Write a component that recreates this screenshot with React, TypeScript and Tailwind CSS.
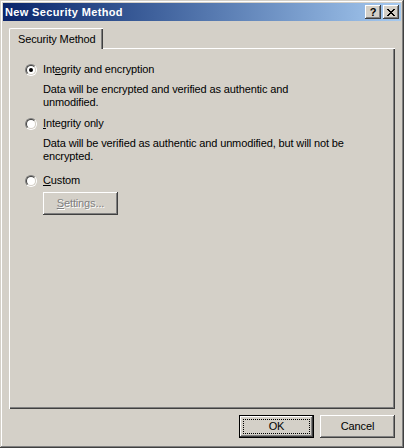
import React from "react";

const raised =
  "shadow-[inset_-1px_-1px_#404040,inset_1px_1px_#ffffff,inset_-2px_-2px_#808080,inset_2px_2px_#d4d0c8]";

const Radio = ({ checked }: { checked?: boolean }) => (
  <div className="w-[12px] h-[12px] rounded-full border border-t-[#808080] border-l-[#808080] border-b-white border-r-white shrink-0">
    <div className="w-full h-full rounded-full border border-t-[#404040] border-l-[#404040] border-b-[#d4d0c8] border-r-[#d4d0c8] bg-white flex items-center justify-center">
      {checked && <div className="w-[4px] h-[4px] rounded-full bg-black" />}
    </div>
  </div>
);

const Option = ({
  label,
  checked,
}: {
  label: React.ReactNode;
  checked?: boolean;
}) => (
  <div className="flex items-center gap-[6px] h-[13px]">
    <Radio checked={checked} />
    <span className="whitespace-nowrap">{label}</span>
  </div>
);

const App = (): React.ReactElement => {
  return (
    <div
      className="w-[404px] h-[448px] bg-[#d4d0c8] text-[11px] leading-[13px] tracking-[-0.13px] text-black flex flex-col p-px shadow-[inset_-1px_-1px_#404040,inset_1px_1px_#d4d0c8,inset_-2px_-2px_#808080,inset_2px_2px_#ffffff]"
      style={{ fontFamily: '"Liberation Sans", Arial, sans-serif' }}
    >
      <div className="p-[2px] flex flex-col h-full">
        {/* title bar */}
        <div className="h-[18px] bg-linear-to-r from-[#0a246a] to-[#a6caf0] flex items-center pl-[2px] pr-[2px]">
          <span className="text-white font-bold text-[11px] tracking-[0.35px] flex-1">
            New Security Method
          </span>
          <div className="flex gap-[2px]">
            <div
              className={`w-[16px] h-[14px] bg-[#d4d0c8] ${raised} flex items-center justify-center font-bold text-[11px] leading-none`}
            >
              ?
            </div>
            <div
              className={`w-[16px] h-[14px] bg-[#d4d0c8] ${raised} flex items-center justify-center`}
            >
              <svg width="8" height="7" viewBox="0 0 8 7">
                <path
                  d="M0 0h2v1h1v1h2V1h1V0h2v1H7v1H6v1H5v1h1v1h1v1h1v1H6V6H5V5H3v1H2v1H0V6h1V5h1V4h1V3H2V2H1V1H0z"
                  fill="#000"
                />
              </svg>
            </div>
          </div>
        </div>

        {/* body */}
        <div className="flex-1 flex flex-col px-[6px] pt-[7px] pb-[7px]">
          <div className="flex">
            <div className="relative z-10 h-[21px] pl-[8px] pr-[7px] flex items-center bg-[#d4d0c8] rounded-tl-[2px] border-t border-l border-white shadow-[inset_-1px_0_#404040,inset_-2px_0_#808080]">
              <span className="whitespace-nowrap mt-[1px]">Security Method</span>
            </div>
          </div>
          <div className="-mt-px h-[361px] border-t border-l border-white shadow-[inset_-1px_-1px_#404040,inset_-2px_-2px_#808080] pl-[15px] pt-[14px]">
            <Option
              checked
              label={
                <>
                  Int<u>e</u>grity and encryption
                </>
              }
            />
            <div className="ml-[18px] mt-[7px] whitespace-nowrap">
              Data will be encrypted and verified as authentic and
              <br />
              unmodified.
            </div>
            <div className="mt-[8px]">
              <Option
                label={
                  <>
                    <u>I</u>ntegrity only
                  </>
                }
              />
            </div>
            <div className="ml-[18px] mt-[7px] whitespace-nowrap">
              Data will be verified as authentic and unmodified, but will not be
              <br />
              encrypted.
            </div>
            <div className="mt-[11px]">
              <Option
                label={
                  <>
                    <u>C</u>ustom
                  </>
                }
              />
            </div>
            <div
              className={`ml-[18px] mt-[5px] w-[75px] h-[23px] ${raised} flex items-center justify-center text-[#808080] [text-shadow:1px_1px_#ffffff]`}
            >
              <span>
                <u>S</u>ettings...
              </span>
            </div>
          </div>

          <div className="flex justify-end gap-[6px] mt-[6px]">
            <div className="w-[75px] h-[23px] border border-black">
              <div className={`w-full h-full ${raised} p-[3px]`}>
                <div className="w-full h-full border border-dotted border-black flex items-center justify-center">
                  OK
                </div>
              </div>
            </div>
            <div
              className={`w-[75px] h-[23px] ${raised} flex items-center justify-center`}
            >
              Cancel
            </div>
          </div>
        </div>
      </div>
    </div>
  );
};

export default App;
